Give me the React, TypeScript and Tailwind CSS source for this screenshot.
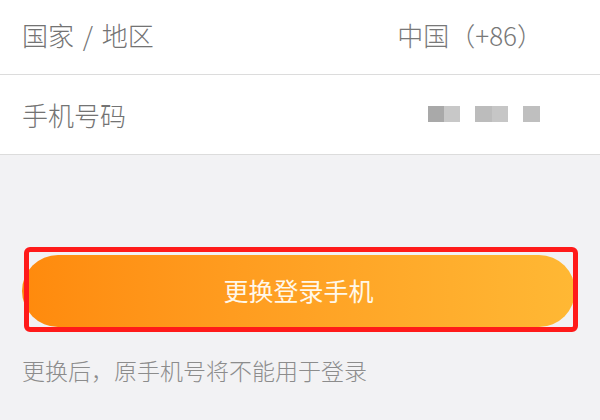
export default function App() {
    const font = { fontFamily: '"Noto Sans CJK SC", "Noto Sans", sans-serif' };
    return (
        <div className="relative w-[600px] h-[420px] overflow-hidden bg-[#f2f2f4]" style={font}>
            {/* 信息列表 */}
            <div className="bg-white">
                <div className="h-[75px] flex items-center justify-between pl-[22px] pr-[57px] pb-[6px] border-b border-[#dcdcdc]">
                    <span className="text-[26px] font-light text-[#737373]">
                        国家 <span className="mx-[3px]">/</span> 地区
                    </span>
                    <span className="text-[26px] font-light text-[#787878]">中国（+86）</span>
                </div>
                <div className="h-[80px] flex items-center justify-between pl-[22px] pr-[60px] border-b border-[#dcdcdc]">
                    <span className="text-[26px] font-light text-[#737373]">手机号码</span>
                    {/* 打码的号码 */}
                    <div className="flex items-center gap-[15px] mt-[-1px]">
                        <div className="flex">
                            <div className="w-[16px] h-[16px] bg-[#a9a9a9]" />
                            <div className="w-[16px] h-[16px] bg-[#c8c8c8]" />
                        </div>
                        <div className="flex">
                            <div className="w-[17px] h-[16px] bg-[#bcbcbc]" />
                            <div className="w-[16px] h-[16px] bg-[#c6c6c6]" />
                        </div>
                        <div className="w-[17px] h-[16px] bg-[#bfbfbf]" />
                    </div>
                </div>
            </div>

            {/* 更换按钮 */}
            <div className="mt-[100px] pl-[22px]">
                <button
                    type="button"
                    className="w-[553px] h-[72px] rounded-full bg-gradient-to-r from-[#ff8a0c] to-[#ffb834] text-[#fff8ea] text-[25px] flex items-center justify-center"
                >
                    更换登录手机
                </button>
            </div>

            <p className="mt-[28px] pl-[22px] text-[23px] leading-[30px] font-light text-[#8c8c8c]">
                更换后，原手机号将不能用于登录
            </p>

            {/* 红框标注 */}
            <div className="absolute left-[24px] top-[247px] w-[554px] h-[85px] border-[5px] border-[#ff1a1a] rounded-[6px]" />
        </div>
    );
}
